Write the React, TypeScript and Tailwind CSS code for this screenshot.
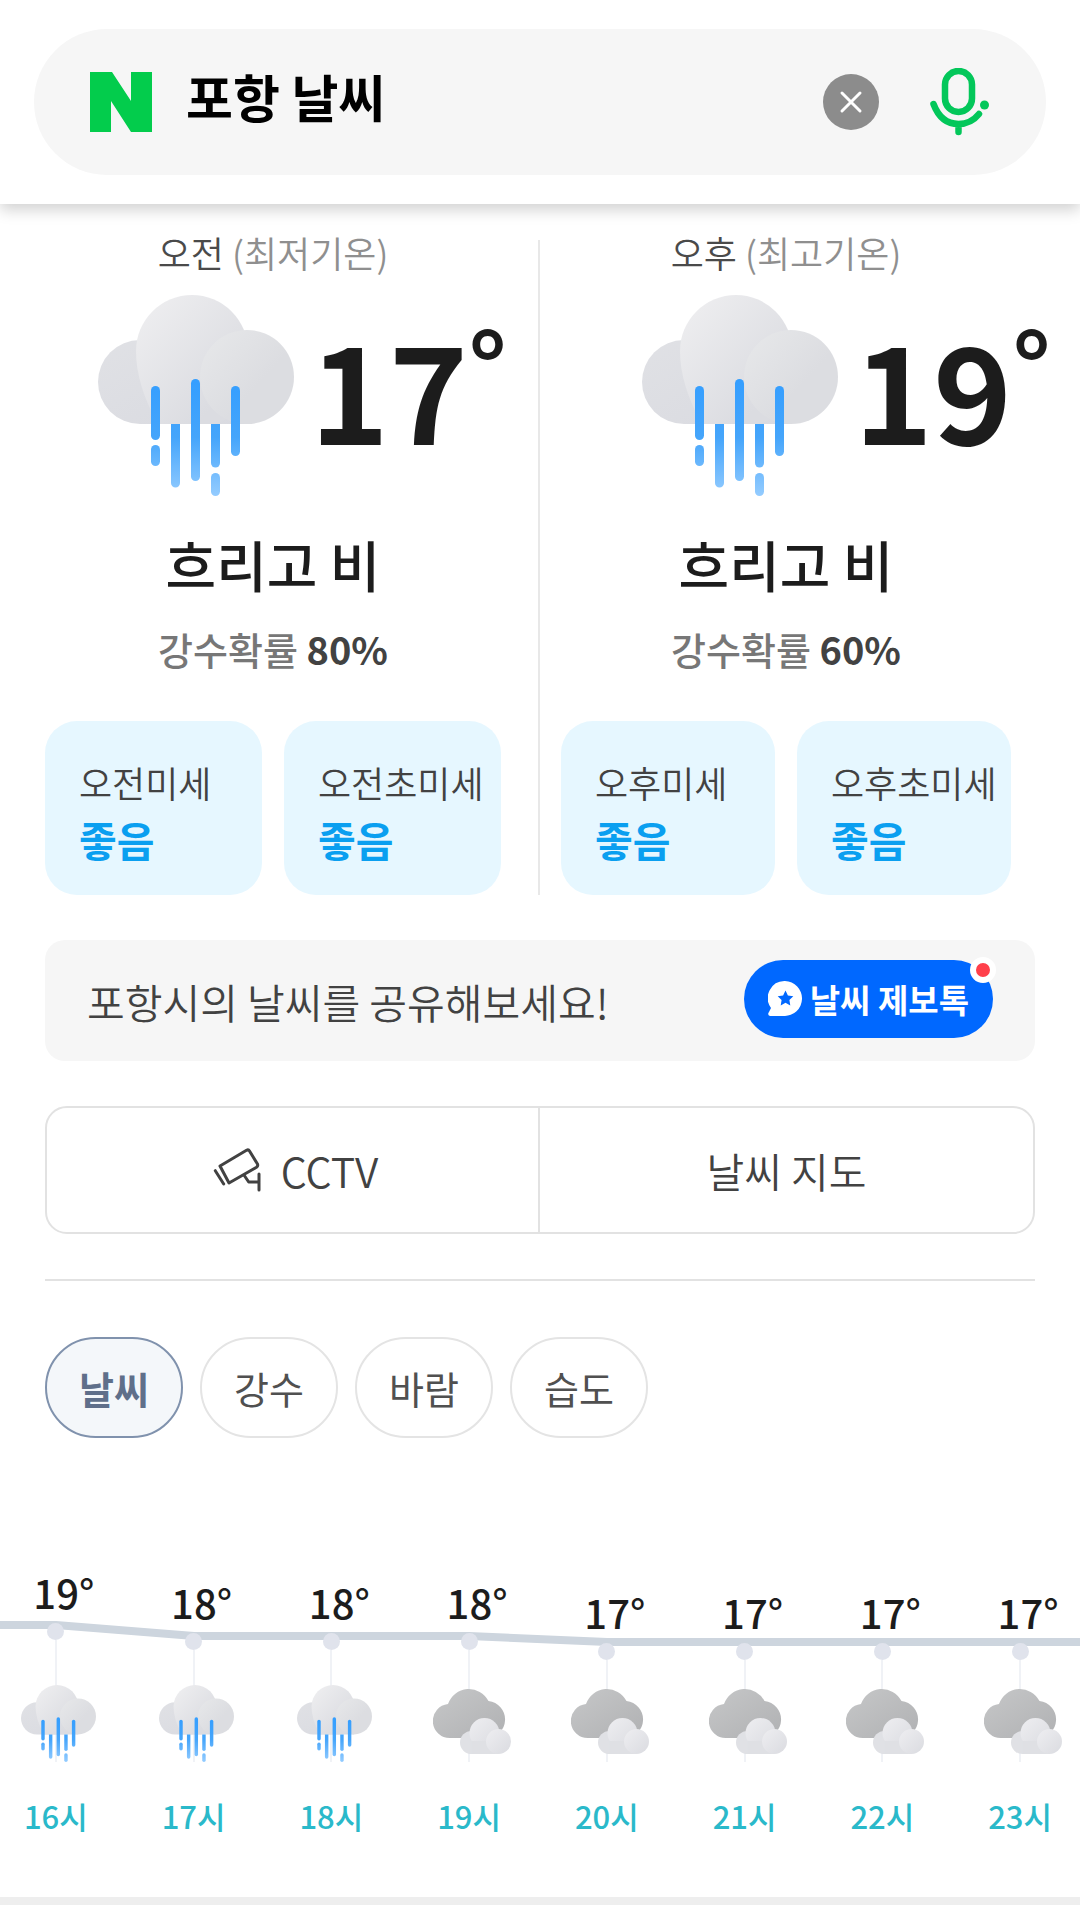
import { useId, useState } from "react";

function RainCloud({ className }: { className: string }) {
  const id = useId();
  return (
    <svg viewBox="0 0 196 201" className={className} aria-hidden="true">
      <defs>
        <linearGradient id={id + "base"} x1="0" y1="0" x2="1" y2="1">
          <stop offset="0" stopColor="#e0e1e5" />
          <stop offset="1" stopColor="#d9dae0" />
        </linearGradient>
        <linearGradient id={id + "mid"} x1="0.1" y1="0.1" x2="0.75" y2="0.8">
          <stop offset="0" stopColor="#ededef" />
          <stop offset="1" stopColor="#dbdce1" />
        </linearGradient>
        <linearGradient id={id + "right"} x1="0.05" y1="0.1" x2="0.6" y2="0.6">
          <stop offset="0" stopColor="#e6e7e9" />
          <stop offset="1" stopColor="#dcdde1" />
        </linearGradient>
        <linearGradient id={id + "rain"} gradientUnits="userSpaceOnUse" x1="0" y1="84" x2="0" y2="201">
          <stop offset="0" stopColor="#349eff" />
          <stop offset="0.5" stopColor="#45a5fb" />
          <stop offset="1" stopColor="#94ccff" />
        </linearGradient>
      </defs>
      <path d="M42 45a42 42 0 0 0 0 84H149V60Z" fill={"url(#" + id + "base)"} />
      <path d="M38 56a56 56 0 1 1 112 0Q150 129 110 129H60Q38 90 38 56Z" fill={"url(#" + id + "mid)"} />
      <circle cx="149" cy="82" r="47" fill={"url(#" + id + "right)"} />
      <g fill={"url(#" + id + "rain)"}>
        <rect x="53" y="91" width="9" height="54" rx="4.5" />
        <rect x="53" y="150" width="9" height="21" rx="4.5" />
        <path d="M73 129h9v59a4.5 4.5 0 0 1-9 0Z" />
        <rect x="93" y="84" width="9" height="102" rx="4.5" />
        <path d="M113 129h9v39a4.5 4.5 0 0 1-9 0Z" />
        <rect x="113" y="178" width="9" height="23" rx="4.5" />
        <rect x="133" y="91" width="9" height="70" rx="4.5" />
      </g>
    </svg>
  );
}

function CloudyIcon({ className }: { className: string }) {
  const id = useId();
  return (
    <svg viewBox="0 0 78 66" className={className} aria-hidden="true">
      <defs>
        <linearGradient id={id + "dark"} x1="0" y1="0" x2="1" y2="1">
          <stop offset="0" stopColor="#c6c7c8" />
          <stop offset="1" stopColor="#b0b1b3" />
        </linearGradient>
        <linearGradient id={id + "light"} x1="0" y1="0" x2="1" y2="1">
          <stop offset="0" stopColor="#eeeef1" />
          <stop offset="1" stopColor="#dadbe0" />
        </linearGradient>
      </defs>
      <path d="M17 49a17 17 0 0 1-2-33.900a22 22 0 0 1 40.500-3A18.500 18.500 0 0 1 53.500 49Z" fill={"url(#" + id + "dark)"} />
      <circle cx="38.500" cy="53.500" r="11.500" fill="#e0e1e5" />
      <circle cx="51.500" cy="44" r="15" fill={"url(#" + id + "light)"} />
      <path d="M38.500 52H65v13H38.500Z" fill="#dfe0e4" />
      <circle cx="65.500" cy="52.500" r="12.500" fill={"url(#" + id + "light)"} />
    </svg>
  );
}

function NaverLogo() {
  return (
    <svg viewBox="0 0 62 60" className="h-[60px] w-[62px]" role="img" aria-label="NAVER">
      <path d="M0 0h22l19 29V0h21v60H41L21 29v31H0Z" fill="#03cc4c" />
    </svg>
  );
}

function MicIcon() {
  return (
    <svg viewBox="0 0 60 68" className="h-[68px] w-[60px]" fill="none" stroke="#03c75a" strokeWidth="6.500" strokeLinecap="round" aria-hidden="true">
      <rect x="15" y="3" width="27" height="41" rx="13.500" />
      <path d="M3.500 36Q11 56 28.500 56Q41 56 49 46M28.500 56v8" />
      <circle cx="54.500" cy="37" r="4.500" fill="#03c75a" stroke="none" />
    </svg>
  );
}

function CctvIcon() {
  return (
    <svg viewBox="0 0 50 48" className="h-[48px] w-[50px]" fill="none" stroke="#424242" strokeWidth="3" strokeLinecap="round" strokeLinejoin="round" aria-hidden="true">
      <path d="M9 20L35.500 4.300Q37.500 3.300 38.500 5L46.500 18Q47.300 20 45.500 21.300L18 37Z" />
      <path d="M4.300 24.700l8.400 13.300M33.300 29.500l4.400 6.500H48M48 28v16" />
    </svg>
  );
}

function TalkIcon() {
  return (
    <svg viewBox="0 0 34 35" className="h-[35px] w-[34px]" aria-hidden="true">
      <path d="M17 0a17 17 0 1 1-1 35H2q-3-1-1-4l2-4A17 17 0 0 1 17 0Z" fill="#fff" />
      <path d="M17.500 9.500l2.400 4.900 5.400.8-3.900 3.800.9 5.400-4.800-2.600-4.800 2.600.9-5.400-3.900-3.800 5.400-.8Z" fill="#0068ff" />
    </svg>
  );
}

function Temperature({ value }: { value: number }) {
  return (
    <p className="flex items-start font-bold text-[#1c1c1c]">
      <span className="pt-6 text-[134px] leading-[136px]">{value}</span>
      <span className="text-[96px] leading-[136px]">°</span>
    </p>
  );
}

function DustCard({ label, grade }: { label: string; grade: string }) {
  return (
    <a href="#dust" className="block h-[174px] rounded-[32px] bg-[#e6f7ff] pt-9 pl-[34px] whitespace-nowrap">
      <span className="block text-[36px] leading-[50px] font-[350] text-[#424242]">{label}</span>
      <strong className="block pt-1 text-[41px] leading-[56px] font-bold text-[#0a9ff0]">{grade}</strong>
    </a>
  );
}

type HalfDay = {
  name: string;
  note: string;
  temp: number;
  chance: string;
  panel: string;
  row: string;
  inner: string;
};

const HALF_DAYS: HalfDay[] = [
  { name: "오전", note: "(최저기온)", temp: 17, chance: "80%", panel: "border-r-2 border-[#e8e8e8]", row: "pl-[98px]", inner: "pl-[45px] pr-[37px]" },
  { name: "오후", note: "(최고기온)", temp: 19, chance: "60%", panel: "", row: "pl-[102px]", inner: "pl-[21px] pr-[69px]" },
];

function HalfDayPanel({ day }: { day: HalfDay }) {
  return (
    <section className={"min-w-0 " + day.panel}>
      <h2 className={"text-center text-[36px] leading-[24px] font-[350] whitespace-nowrap text-[#4a4a4a] " + day.inner}>
        {day.name} <span className="text-[#8f8f8f]">{day.note}</span>
      </h2>
      <div className={"mt-[31px] flex h-[201px] gap-4 " + day.row}>
        <RainCloud className="h-[201px] w-[196px] shrink-0" />
        <Temperature value={day.temp} />
      </div>
      <div className={day.inner}>
        <p className="mt-[31px] text-center text-[55px] leading-[72px] font-medium text-[#1c1c1c]">흐리고 비</p>
        <p className="mt-6 text-center text-[38px] leading-[52px] font-medium text-[#777777]">
          강수확률 <strong className="font-bold text-[#424242]">{day.chance}</strong>
        </p>
        <div className="mt-[46px] grid grid-cols-2 gap-[22px]">
          <DustCard label={day.name + "미세"} grade="좋음" />
          <DustCard label={day.name + "초미세"} grade="좋음" />
        </div>
      </div>
    </section>
  );
}

const TABS = ["날씨", "강수", "바람", "습도"];

const HOURS = [
  { hour: 16, temp: 19, rain: true },
  { hour: 17, temp: 18, rain: true },
  { hour: 18, temp: 18, rain: true },
  { hour: 19, temp: 18, rain: false },
  { hour: 20, temp: 17, rain: false },
  { hour: 21, temp: 17, rain: false },
  { hour: 22, temp: 17, rain: false },
  { hour: 23, temp: 17, rain: false },
];

function HourlyChart() {
  return (
    <section className="mt-[122px] overflow-hidden" aria-label="시간별 날씨">
      <ol className="relative -mr-[9px] -ml-[13px] grid grid-cols-8">
        <svg viewBox="0 0 1102 100" preserveAspectRatio="none" className="absolute inset-x-0 top-0 h-[100px] w-full" aria-hidden="true">
          <polyline points="0,65 69,65 207,76 482,76 620,82 1102,82" fill="none" stroke="#cdd5de" strokeWidth="8" />
        </svg>
        {HOURS.map(({ hour, temp, rain }) => (
          <li key={hour} className="relative flex flex-col items-center">
            <div className="flex h-[125px] flex-col items-center" style={{ paddingTop: 8 + (19 - temp) * 10 }}>
              <span className="pl-4 text-[40px] leading-[48px] font-medium text-[#1c1c1c]">{temp}°</span>
              <span className="mt-[7px] size-[17px] shrink-0 rounded-full bg-[#e0e3ec]" />
              <span className="w-[2px] flex-1 bg-[#f0f2f6]" />
            </div>
            <div className="relative flex h-[77px] w-full justify-center">
              <span className="absolute inset-y-0 w-[2px] bg-[#f0f2f6]" />
              {rain ? (
                <RainCloud className="relative ml-[6px] h-[77px] w-[75px]" />
              ) : (
                <CloudyIcon className="relative mt-1 ml-[6px] h-[66px] w-[78px]" />
              )}
            </div>
            <span className="mt-[32px] text-[31px] leading-[44px] font-medium text-[#2ab9ca]">{hour}시</span>
          </li>
        ))}
      </ol>
    </section>
  );
}

export default function App() {
  const [query, setQuery] = useState("포항 날씨");
  const [tab, setTab] = useState("날씨");
  return (
    <div className="overflow-x-hidden bg-white font-['Noto_Sans_CJK_KR',sans-serif]">
      <header className="px-[34px] pt-[29px] pb-[29px] shadow-[0_6px_14px_rgba(0,0,0,0.18)]">
        <form role="search" onSubmit={(e) => e.preventDefault()} className="flex h-[146px] items-center rounded-full bg-[#f6f6f6] pr-[56px] pl-[56px]">
          <a href="#home">
            <NaverLogo />
          </a>
          <input
            aria-label="검색어"
            value={query}
            onChange={(e) => setQuery(e.target.value)}
            className="ml-[34px] h-[88px] min-w-0 flex-1 bg-transparent pb-3 text-[51px] font-bold text-black outline-none"
          />
          <button type="button" aria-label="지우기" onClick={() => setQuery("")} className="flex size-[56px] items-center justify-center rounded-full bg-[#8c8c8c]">
            <svg viewBox="0 0 20 20" className="size-[20px] overflow-visible" stroke="#fff" strokeWidth="3" strokeLinecap="round" aria-hidden="true">
              <path d="M1 1l18 18M19 1L1 19" />
            </svg>
          </button>
          <button type="button" aria-label="음성 검색" className="ml-[51px]">
            <MicIcon />
          </button>
        </form>
      </header>

      <main>
        <div className="mt-9 grid grid-cols-2">
          {HALF_DAYS.map((day) => (
            <HalfDayPanel key={day.name} day={day} />
          ))}
        </div>

        <div className="mx-[45px]">
          <div className="mt-[45px] flex h-[121px] items-center justify-between rounded-[20px] bg-[#f6f6f6] pr-[42px] pl-[42px]">
            <p className="text-[41px] leading-[56px] font-[350] text-[#424242]">포항시의 날씨를 공유해보세요!</p>
            <a href="#talk" className="relative mb-1 flex h-[78px] items-center gap-2 rounded-full bg-[#0068ff] px-6 text-[33px] leading-[44px] font-bold text-white">
              <TalkIcon />
              날씨 제보톡
              <span className="absolute -top-[3px] -right-[3px] size-[26px] rounded-full border-6 border-white bg-[#ff3f4a]" />
            </a>
          </div>

          <nav className="mt-[45px] grid h-[128px] grid-cols-2 divide-x-2 divide-[#e2e2e2] rounded-[22px] border-2 border-[#e2e2e2] text-[41px] leading-[56px] font-[350] text-[#424242]">
            <a href="#cctv" className="flex items-center justify-center gap-5 pl-1">
              <CctvIcon />
              CCTV
            </a>
            <a href="#map" className="flex items-center justify-center">
              날씨 지도
            </a>
          </nav>

          <hr className="mt-[45px] border-t-2 border-[#e2e2e2]" />

          <div role="tablist" className="mt-[56px] flex gap-[17px]">
            {TABS.map((name) => (
              <button
                key={name}
                type="button"
                role="tab"
                aria-selected={tab === name}
                onClick={() => setTab(name)}
                className={
                  "h-[101px] w-[138px] rounded-full border-2 text-[38px] leading-[52px] " +
                  (tab === name ? "border-[#8092ad] bg-[#f4f7fa] font-bold text-[#5f6f8a]" : "border-[#e4e4e4] bg-white text-[#505050]")
                }
              >
                {name}
              </button>
            ))}
          </div>
        </div>

        <HourlyChart />
      </main>
      <div className="mt-[59px] h-2 bg-[#eeeeee]" />
    </div>
  );
}
